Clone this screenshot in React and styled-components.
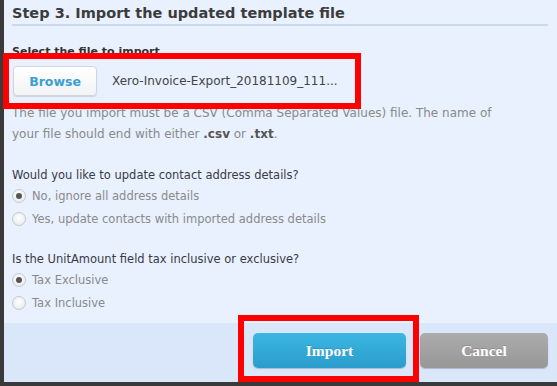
import React from "react";
import styled, { createGlobalStyle } from "styled-components";

const GlobalStyle = createGlobalStyle`
  html, body {
    margin: 0;
    padding: 0;
    background: #3a3a3a;
  }
  * {
    box-sizing: border-box;
  }
`;

const Frame = styled.div`
  width: 557px;
  height: 386px;
  padding: 0 0 4px 4px;
  background: #3a3a3a;
  overflow: hidden;
`;

const Panel = styled.div`
  height: 100%;
  display: flex;
  flex-direction: column;
  background: #e8f1fd;
  font-family: "DejaVu Sans", Tahoma, sans-serif;
`;

const Content = styled.div`
  flex: 1;
  padding: 0 9px 0 8px;
`;

const Title = styled.h2`
  margin: 0;
  padding-top: 1px;
  height: 24px;
  line-height: 24px;
  font-size: 14.5px;
  font-weight: bold;
  color: #3c3c3c;
`;

const Rule = styled.div`
  height: 2px;
  background: #cbd9ec;
`;

const FileSection = styled.div`
  position: relative;
  margin-top: 19px;
`;

const Label = styled.div`
  font-size: 11px;
  font-weight: bold;
  color: #333;
  line-height: 14px;
`;

const FileRow = styled.div`
  display: flex;
  align-items: center;
  gap: 15px;
  margin-top: 7px;
`;

const BrowseButton = styled.button`
  width: 84px;
  height: 30px;
  margin-left: 1px;
  border: 1px solid #d2d6dc;
  border-radius: 4px;
  background: linear-gradient(#ffffff, #f1f3f5);
  box-shadow: 0 1px 1px rgba(0, 0, 0, 0.12);
  color: #3a9fd3;
  font-family: "DejaVu Sans", Tahoma, sans-serif;
  font-size: 12.5px;
  font-weight: bold;
`;

const FileName = styled.span`
  font-size: 12px;
  color: #444;
`;

const Highlight = styled.div`
  position: absolute;
  border: 6px solid #ff0000;
  pointer-events: none;
  top: ${(p) => p.$top}px;
  left: ${(p) => p.$left}px;
  right: ${(p) => p.$right}px;
  bottom: ${(p) => p.$bottom}px;
`;

const Note = styled.p`
  margin: 7px 0 0;
  font-size: 12px;
  line-height: 21px;
  color: #8a8a8a;

  b {
    color: #555;
  }
`;

const Question = styled.div`
  margin-top: ${(p) => p.$gap}px;
`;

const QuestionText = styled.div`
  font-size: 11.5px;
  line-height: 16px;
  color: #3a3a48;
`;

const Option = styled.label`
  display: flex;
  align-items: center;
  gap: 6px;
  height: 21px;
  margin-top: 2px;
  font-size: 11.5px;
  color: #8a8a8a;
`;

const Radio = styled.span`
  width: 14px;
  height: 14px;
  border-radius: 50%;
  border: 1px solid #c6c9cd;
  background: radial-gradient(circle at 50% 40%, #ffffff, #e3e5e8);
  display: flex;
  align-items: center;
  justify-content: center;

  &::after {
    content: "";
    width: 6px;
    height: 6px;
    border-radius: 50%;
    background: ${(p) => (p.$checked ? "#555" : "transparent")};
  }
`;

const Footer = styled.div`
  height: 59px;
  background: #dae7fb;
  display: flex;
  justify-content: flex-end;
  align-items: flex-start;
  gap: 14px;
  padding: 10px 9px 0 0;
`;

const ButtonSlot = styled.div`
  position: relative;
`;

const ActionButton = styled.button`
  width: ${(p) => p.$width}px;
  height: 35px;
  border: none;
  border-radius: 5px;
  color: #fff;
  font-family: "Liberation Serif", "Times New Roman", serif;
  font-size: 15.5px;
  font-weight: bold;
  background: ${(p) =>
    p.$primary
      ? "linear-gradient(#3cb6e2, #2b9ccb)"
      : "linear-gradient(#acacac, #979797)"};
  box-shadow: 0 1px 1px rgba(0, 0, 0, 0.2);
  text-shadow: 0 -1px 0 rgba(0, 0, 0, 0.15);
`;

const App = () => {
  return (
    <>
      <GlobalStyle />
      <Frame>
        <Panel>
          <Content>
            <Title>Step 3. Import the updated template file</Title>
            <Rule />
            <FileSection>
              <Label>Select the file to import</Label>
              <FileRow>
                <BrowseButton>Browse</BrowseButton>
                <FileName>Xero-Invoice-Export_20181109_111...</FileName>
              </FileRow>
              <Highlight $top={8} $left={-9} $right={187} $bottom={-13} />
            </FileSection>
            <Note>
              The file you import must be a CSV (Comma Separated Values) file. The name of
              <br />
              your file should end with either <b>.csv</b> or <b>.txt</b>.
            </Note>
            <Question $gap={22}>
              <QuestionText>Would you like to update contact address details?</QuestionText>
              <Option>
                <Radio $checked />
                No, ignore all address details
              </Option>
              <Option>
                <Radio />
                Yes, update contacts with imported address details
              </Option>
            </Question>
            <Question $gap={22}>
              <QuestionText>Is the UnitAmount field tax inclusive or exclusive?</QuestionText>
              <Option>
                <Radio $checked />
                Tax Exclusive
              </Option>
              <Option>
                <Radio />
                Tax Inclusive
              </Option>
            </Question>
          </Content>
          <Footer>
            <ButtonSlot>
              <ActionButton $primary $width={153}>Import</ActionButton>
              <Highlight $top={-18} $left={-15} $right={-13} $bottom={-14} />
            </ButtonSlot>
            <ButtonSlot>
              <ActionButton $width={128}>Cancel</ActionButton>
            </ButtonSlot>
          </Footer>
        </Panel>
      </Frame>
    </>
  );
};

export default App;
